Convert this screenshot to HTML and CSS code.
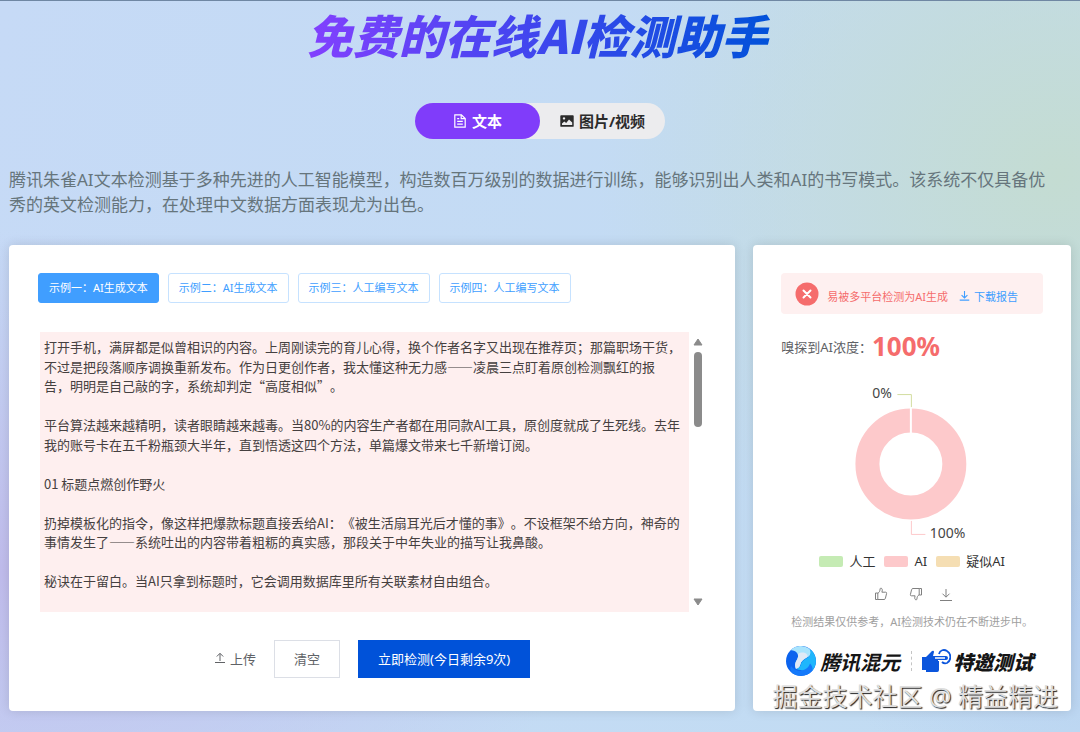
FILE: index.html
```html
<!DOCTYPE html>
<html lang="zh-CN">
<head>
<meta charset="utf-8">
<meta name="viewport" content="width=device-width, initial-scale=1">
<title>免费的在线AI检测助手</title>
<link rel="stylesheet" href="styles.css">
</head>
<body>
<main class="page">
  <h1 class="title"><span class="title-text">免费的在线AI检测助手</span></h1>

  <div class="modes" role="tablist">
    <button class="mode mode-active" type="button" role="tab" aria-selected="true">
      <svg class="mode-icon" viewBox="0 0 14 14" fill="none" stroke="currentColor" stroke-width="1.2" aria-hidden="true"><path d="M1.8 .8h6.6l3.8 3.7v8.7H1.8z"/><path d="M8.2 1v3.7h3.8M4.2 4.6h2M4.2 7.4h5.6M4.2 10.2h5.6"/></svg>
      <span>文本</span>
    </button>
    <button class="mode" type="button" role="tab" aria-selected="false">
      <svg class="mode-icon" viewBox="0 0 14 14" aria-hidden="true"><path fill="currentColor" fill-rule="evenodd" d="M1.2 1.2h11.6q.9 0 .9.9v9.8q0 .9-.9.9H1.2q-.9 0-.9-.9V2.100q0-.9.9-.9zM2 11h10.200V8.600L9 5.400 6.200 8.900 4.300 7.500 2 9.600zM4 3.200a1.200 1.200 0 1 0 .01 0z"/></svg>
      <span>图片/视频</span>
    </button>
  </div>

  <p class="intro">腾讯朱雀AI文本检测基于多种先进的人工智能模型，构造数百万级别的数据进行训练，能够识别出人类和AI的书写模式。该系统不仅具备优<br>秀的英文检测能力，在处理中文数据方面表现尤为出色。</p>

  <div class="columns">
    <section class="card editor-card">
      <div class="examples">
        <button class="example example-active" type="button">示例一：AI生成文本</button>
        <button class="example" type="button">示例二：AI生成文本</button>
        <button class="example" type="button">示例三：人工编写文本</button>
        <button class="example" type="button">示例四：人工编写文本</button>
      </div>

      <div class="editor">
        <textarea class="editor-text" aria-label="待检测文本" spellcheck="false">打开手机，满屏都是似曾相识的内容。上周刚读完的育儿心得，换个作者名字又出现在推荐页；那篇职场干货，不过是把段落顺序调换重新发布。作为日更创作者，我太懂这种无力感——凌晨三点盯着原创检测飘红的报
告，明明是自己敲的字，系统却判定“高度相似”。

平台算法越来越精明，读者眼睛越来越毒。当80%的内容生产者都在用同款AI工具，原创度就成了生死线。去年我的账号卡在五千粉瓶颈大半年，直到悟透这四个方法，单篇爆文带来七千新增订阅。

01 标题点燃创作野火

扔掉模板化的指令，像这样把爆款标题直接丢给AI：《被生活扇耳光后才懂的事》。不设框架不给方向，神奇的事情发生了——系统吐出的内容带着粗粝的真实感，那段关于中年失业的描写让我鼻酸。

秘诀在于留白。当AI只拿到标题时，它会调用数据库里所有关联素材自由组合。</textarea>
        <div class="scrollbar" aria-hidden="true">
          <svg class="scroll-arrow" viewBox="0 0 10 8"><path d="M5 1 9 7H1z" fill="#8b8b8b" stroke="#8b8b8b" stroke-linejoin="round"/></svg>
          <div class="scroll-track"><div class="scroll-thumb"></div></div>
          <svg class="scroll-arrow" viewBox="0 0 10 8"><path d="M5 7 9 1H1z" fill="#8b8b8b" stroke="#8b8b8b" stroke-linejoin="round"/></svg>
        </div>
      </div>

      <div class="actions">
        <button class="upload" type="button">
          <svg class="small-icon" viewBox="0 0 12 12" fill="none" stroke="currentColor" aria-hidden="true"><path d="M6 9V1.500M2.800 4.500 6 1.300l3.200 3.200M1 10.500h10"/></svg>
          <span>上传</span>
        </button>
        <button class="button" type="button">清空</button>
        <button class="button button-primary" type="button">立即检测(今日剩余9次)</button>
      </div>
    </section>

    <section class="card result-card">
      <div class="alert">
        <svg class="alert-icon" viewBox="0 0 24 24" aria-hidden="true"><circle cx="12" cy="12" r="11.500" fill="#f56c6c"/><path d="m8.500 8.500 7 7m0-7-7 7" stroke="#fff" stroke-width="2" stroke-linecap="round"/></svg>
        <div class="alert-body">
          <span>易被多平台检测为AI生成</span>
          <a class="report" href="#report">
            <svg class="report-icon" viewBox="0 0 12 12" fill="none" stroke="currentColor" stroke-width="1.200" aria-hidden="true"><path d="M6 1v7.500M2.800 5.500 6 8.700l3.200-3.200M.8 11h10.400"/></svg>
            <span>下载报告</span>
          </a>
        </div>
      </div>

      <p class="score"><span>嗅探到AI浓度：</span><strong class="score-value">100%</strong></p>

      <svg class="chart" viewBox="0 0 262 168" role="img" aria-label="人工 0%，AI 100%">
        <circle cx="130" cy="86" r="43.500" fill="none" stroke="#fdc9cb" stroke-width="24"/>
        <path d="M130 29v26" stroke="#fff" stroke-width="2"/>
        <path d="M116.500 16.500h14V29" fill="none" stroke="#d3dda0" stroke-width="1"/>
        <path d="M130.500 143v13.500h14" fill="none" stroke="#fdc9cb" stroke-width="1"/>
        <text class="chart-label" x="111" y="20" text-anchor="end">0%</text>
        <text class="chart-label" x="149" y="160">100%</text>
      </svg>

      <ul class="legend">
        <li class="legend-item"><span class="swatch swatch-human"></span>人工</li>
        <li class="legend-item"><span class="swatch swatch-ai"></span>AI</li>
        <li class="legend-item"><span class="swatch swatch-maybe"></span>疑似AI</li>
      </ul>

      <div class="feedback">
        <button class="icon-button icon-like" type="button" aria-label="赞">
          <svg class="feedback-icon" viewBox="0 0 14 14" fill="none" stroke="currentColor" stroke-linejoin="round"><path d="M1.500 6h2.300v6.500H1.500zM3.800 6.300C5.600 5.200 6 3.800 6.100 1.800q.2-.8 1.100-.6c1.300.5 1.300 2 .7 4h3.800q1.100.1.900 1.200l-1.200 5q-.3 1.100-1.400 1.100H3.800"/></svg>
        </button>
        <button class="icon-button" type="button" aria-label="踩">
          <svg class="feedback-icon" viewBox="0 0 14 14" fill="none" stroke="currentColor" stroke-linejoin="round"><path d="M12.500 8h-2.300V1.500h2.300zM10.200 7.700C8.400 8.800 8 10.200 7.900 12.200q-.2.8-1.100.6c-1.300-.5-1.300-2-.7-4H2.300q-1.100-.1-.9-1.200l1.200-5Q2.900 1.500 4 1.500h6.200"/></svg>
        </button>
        <button class="icon-button" type="button" aria-label="下载">
          <svg class="feedback-icon" viewBox="0 0 14 14" fill="none" stroke="currentColor"><path d="M7 2v8M3.500 6.700 7 10.200l3.500-3.500M1 13.500h12"/></svg>
        </button>
      </div>

      <p class="note">检测结果仅供参考，AI检测技术仍在不断进步中。</p>

      <div class="brands">
        <svg class="brand-mark" viewBox="0 0 30 30" aria-hidden="true">
          <circle cx="15" cy="15" r="15" fill="#0b63ee"/>
          <path d="M4.500 4.300A15 15 0 0 1 23.500 2.700C26 6 25 9 22 11c-4 2-7 4-7.500 7-.4 3-2.500 4.500-4.500 5-1.500-3-1-6 .5-8.500C12.500 11.500 12.500 9 11 7 9.500 5 7 4 4.500 4.300z" fill="#a9e4fd"/>
          <path d="M12 8c3-2 7-2 9 .5 1 1.500.5 2.500-1 3.500-3 1.500-5 3.500-5.500 6-.5 2.500-2 4.500-4.500 5-1.500-3-1-6 .5-8.500C12 12 12.500 10 12 8z" fill="#e0e9f5"/>
          <path d="M23.500 2.700A15 15 0 0 1 26.500 24.500C23 25.500 19 25.500 16 24.500c-2.500-.8-4.500-1-6-1.500 3-.5 4.500-2.500 5-5s3-4.500 6-6c3.500-2 4.500-5.500 2.500-9.300z" fill="#1fb6fc"/>
          <path d="M26.500 24.500C22 30 13 32 6 27c-2-3-2-5-1-7 3 4 7 5.500 11 4.500 4-1 7-3.500 8-7 2 2 3 4.500 2.500 7z" fill="#1479fa"/>
        </svg>
        <span class="brand-name">腾讯混元</span>
        <span class="brand-divider"></span>
        <svg class="brand-hand" viewBox="0 0 30 24" aria-hidden="true">
          <path d="M1 8h4l6-6q2-1 2 1l-1 4h13q2 0 2 2t-2 2h-8v10q0 2-2 2H5v-2H1z" fill="#0b55dc"/>
          <path d="M15 12h3v9q0 2-2 2h-3z" fill="#0b55dc"/>
          <path d="M18 5c1-4 5-5 8-3 5 3 4 10 0 12q-3 1-5-1" fill="none" stroke="#0b55dc" stroke-width="1.800"/>
          <path d="M14 9h10" stroke="#fff" stroke-width="1.500"/>
        </svg>
        <span class="brand-tag">特邀测试</span>
      </div>
    </section>
  </div>
  <div class="watermark">掘金技术社区 @ 精益精进</div>
</main>
</body>
</html>
```

FILE: styles.css
```css
* {
  box-sizing: border-box;
}

body {
  margin: 0;
  color: #606266;
  font-family: "Noto Sans", "Noto Sans CJK SC", sans-serif;
  font-size: 13px;
  text-spacing-trim: space-all;
  background:
    radial-gradient(ellipse 460px 440px at 98% 24%, rgba(196, 220, 210, 1), rgba(196, 220, 210, 0)),
    radial-gradient(ellipse 600px 340px at 0% 78%, rgba(192, 188, 236, 1), rgba(192, 188, 236, 0)),
    radial-gradient(ellipse 300px 300px at 100% 70%, rgba(178, 202, 240, 1), rgba(178, 202, 240, 0)),
    linear-gradient(100deg, #c6daf6, #c1dcf2);
}

button {
  font-family: inherit;
  cursor: pointer;
}

.page {
  position: relative;
  min-height: 100vh;
  padding: 0 9px 20px;
  border-top: 1px solid #6f87a3;
}

.title {
  margin: 0;
  padding-right: 6px;
  text-align: center;
  font-family: "Noto Sans CJK SC", sans-serif;
  font-size: 46px;
  font-style: italic;
  font-weight: 900;
  line-height: 66px;
}

.title-text {
  display: inline-block;
  padding: 0 8px;
  color: transparent;
  background: linear-gradient(90deg, #8540ff, #3f46ee 50%, #0052d9);
  -webkit-background-clip: text;
  background-clip: text;
}

.modes {
  display: flex;
  width: max-content;
  margin: 36px auto 0;
  border-radius: 18px;
  background: #ececee;
}

.mode {
  display: flex;
  align-items: center;
  justify-content: center;
  gap: 5px;
  width: 125px;
  height: 36px;
  padding: 0 0 1px;
  border: 0;
  border-radius: 18px;
  color: #2b2b2b;
  font-size: 15px;
  font-weight: 700;
  background: transparent;
}

.mode-active {
  color: #fff;
  background: #803cfa;
}

.mode-icon {
  width: 14px;
  height: 14px;
}

.intro {
  margin: 28px 0 28px;
  color: #66757c;
  font-size: 17px;
  line-height: 25px;
}

.columns {
  display: grid;
  grid-template-columns: minmax(0, 16fr) minmax(0, 7fr);
  gap: 18px;
}

.card {
  padding: 28px;
  border-radius: 4px;
  background: #fff;
  box-shadow: 0 0 12px rgba(0, 0, 0, 0.12);
}

.editor-card {
  padding: 28px 29px 33px;
}

.examples {
  display: flex;
  flex-wrap: wrap;
  gap: 9px;
}

.example {
  height: 30px;
  padding: 0 10px 2px;
  border: 1px solid #c6e2ff;
  border-radius: 3px;
  color: #409eff;
  font-size: 11px;
  background: #fff;
}

.example-active {
  border-color: #409eff;
  color: #fff;
  background: #409eff;
}

.editor {
  display: flex;
  gap: 4px;
  margin: 29px 0 28px 2px;
  padding-right: 3px;
}

.editor-text {
  flex: 1;
  height: 280px;
  padding: 5px 3px 5px 4px;
  border: 0;
  overflow: hidden;
  resize: none;
  color: #454040;
  font-family: "Noto Sans CJK SC", sans-serif;
  font-size: 13px;
  line-height: 1.5;
  text-spacing-trim: space-all;
  background: #feefef;
}

.scrollbar {
  display: flex;
  flex-direction: column;
  align-items: center;
  gap: 6px;
  width: 10px;
  padding: 6px 0;
}

.scroll-arrow {
  width: 10px;
  height: 8px;
}

.scroll-track {
  flex: 1;
}

.scroll-thumb {
  width: 8px;
  height: 75px;
  border-radius: 4px;
  background: #8b8b8b;
}

.actions {
  display: flex;
  justify-content: center;
  gap: 18px;
}

.upload {
  display: flex;
  align-items: center;
  gap: 4px;
  padding: 0 0 2px;
  border: 0;
  color: #606266;
  font-size: 13px;
  background: none;
}

.small-icon {
  width: 12px;
  height: 12px;
}

.button {
  height: 38px;
  padding: 0 19px 2px;
  border: 1px solid #dcdfe6;
  color: #606266;
  font-size: 13px;
  background: #fff;
}

.button-primary {
  border-color: #0052d9;
  color: #fff;
  background: #0052d9;
}

.alert {
  display: flex;
  align-items: center;
  height: 41px;
  padding: 0 14px;
  border-radius: 4px;
  color: #f56c6c;
  font-size: 11px;
  white-space: nowrap;
  background: #fef0f0;
}

.alert-icon {
  width: 24px;
  height: 24px;
  margin-right: 8px;
}

.alert-body {
  display: flex;
  gap: 11px;
  padding-top: 4px;
}

.report {
  display: flex;
  align-items: center;
  gap: 4px;
  color: #409eff;
  text-decoration: none;
}

.report-icon {
  width: 11px;
  height: 11px;
}

.score {
  display: flex;
  align-items: center;
  height: 36px;
  margin: 14px 0;
}

.score-value {
  color: #f56c6c;
  font-size: 26px;
}

.chart {
  display: block;
  width: 100%;
  height: 168px;
}

.chart-label {
  fill: #464646;
  font-size: 14px;
}

.legend {
  display: flex;
  justify-content: center;
  gap: 9px;
  margin: 5px 0 0;
  padding: 0;
  color: #333;
  list-style: none;
  line-height: 20px;
}

.legend-item {
  display: flex;
  align-items: center;
  gap: 6px;
}

.swatch {
  width: 24px;
  height: 11px;
  border-radius: 2px;
}

.swatch-human {
  background: #c5ebb4;
}

.swatch-ai {
  background: #fdc9cb;
}

.swatch-maybe {
  background: #f5deb3;
}

.feedback {
  display: flex;
  justify-content: center;
  gap: 16px;
  margin-top: 16px;
  padding-left: 2px;
}

.icon-button {
  padding: 0;
  border: 0;
  color: #808080;
  background: none;
}

.icon-like {
  margin-right: 5px;
}

.feedback-icon {
  display: block;
  width: 14px;
  height: 14px;
}

.note {
  margin: 12px 0 0;
  color: #a0a0a0;
  font-size: 11px;
  line-height: 18px;
  text-align: center;
  white-space: nowrap;
}

.brands {
  display: flex;
  align-items: center;
  justify-content: center;
  height: 30px;
  margin-top: 15px;
  padding-right: 5px;
  color: #151515;
  font-family: "Noto Sans CJK SC", sans-serif;
  font-size: 20px;
  font-style: italic;
  font-weight: 700;
  white-space: nowrap;
}

.brand-mark {
  width: 30px;
  height: 30px;
  margin-right: 4px;
}

.brand-divider {
  height: 20px;
  margin: 0 9px 0 11px;
  border-left: 1px dashed #c4c4c4;
}

.brand-hand {
  width: 30px;
  height: 24px;
  margin-right: 2px;
}

.brand-tag {
  font-weight: 900;
}

.watermark {
  position: absolute;
  right: 22px;
  bottom: 17px;
  color: #dedede;
  font-size: 25px;
  line-height: 38px;
  text-shadow: 1px 1px 1px #222;
  white-space: nowrap;
}
```
